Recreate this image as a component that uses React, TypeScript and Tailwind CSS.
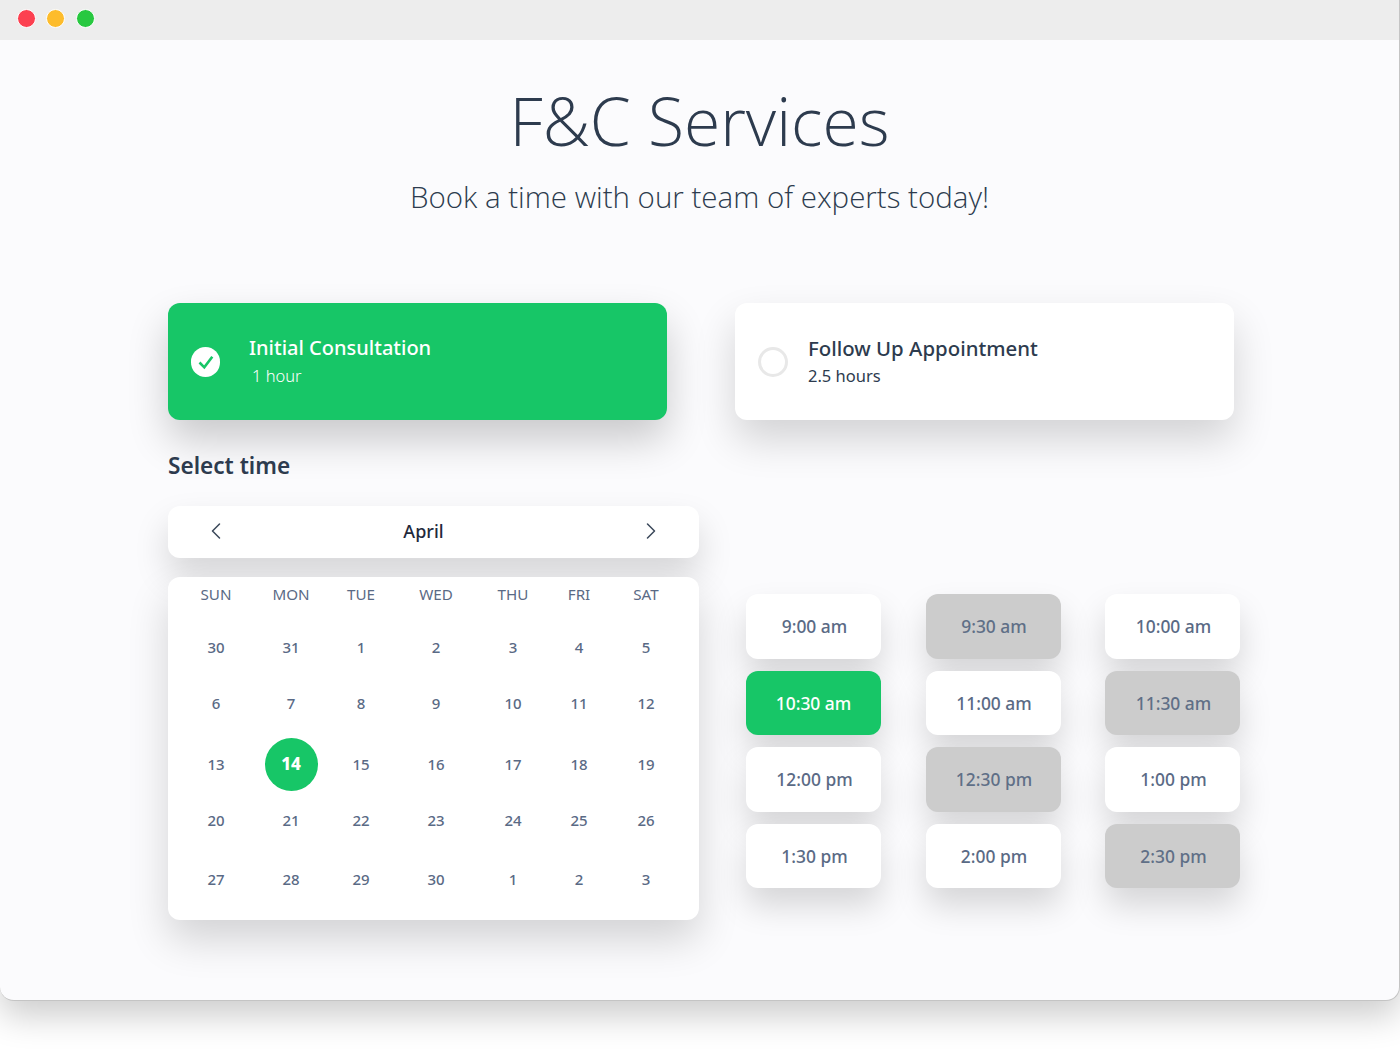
import React from 'react';
import { ChevronLeft, ChevronRight } from 'lucide-react';

const days = ['SUN', 'MON', 'TUE', 'WED', 'THU', 'FRI', 'SAT'];
const dates = [
  30, 31, 1, 2, 3, 4, 5,
  6, 7, 8, 9, 10, 11, 12,
  13, 14, 15, 16, 17, 18, 19,
  20, 21, 22, 23, 24, 25, 26,
  27, 28, 29, 30, 1, 2, 3,
];
const times = [
  { label: '9:00 am', state: 'open' },
  { label: '9:30 am', state: 'taken' },
  { label: '10:00 am', state: 'open' },
  { label: '10:30 am', state: 'selected' },
  { label: '11:00 am', state: 'open' },
  { label: '11:30 am', state: 'taken' },
  { label: '12:00 pm', state: 'open' },
  { label: '12:30 pm', state: 'taken' },
  { label: '1:00 pm', state: 'open' },
  { label: '1:30 pm', state: 'open' },
  { label: '2:00 pm', state: 'open' },
  { label: '2:30 pm', state: 'taken' },
];

const App: React.FC = () => {
  return (
    <div className="min-h-[1054px] bg-white pb-[53px] font-['Noto_Sans',sans-serif]">
      <div className="h-[1001px] rounded-b-[14px] border-r border-b border-[#c4c4c4] bg-[#fbfbfd] shadow-[0_15px_34px_rgba(0,0,0,0.2)]">
        <div className="flex h-10 items-center gap-[10.5px] bg-[#ededed] pb-[4px] pl-[16.5px]">
          <span className="h-[19px] w-[19px] rounded-full border border-white bg-[#fc4050]" />
          <span className="h-[19px] w-[19px] rounded-full border border-white bg-[#fdbc2c]" />
          <span className="h-[19px] w-[19px] rounded-full border border-white bg-[#28c840]" />
        </div>

        <h1 className="mt-[36px] text-center font-['Open_Sans',sans-serif] text-[66px] leading-[88px] font-light text-[#2d3b4e]">
          F&amp;C Services
        </h1>
        <p className="mt-[11px] text-center font-['Open_Sans',sans-serif] text-[29.5px] leading-[44px] font-light text-[#2d3b4e]">
          Book a time with our team of experts today!
        </p>

        <div className="mt-[84px] pl-[168px]">
          <div className="flex gap-[68px]">
            <div className="flex h-[117px] w-[499px] items-center rounded-xl bg-[#17c667] pl-[23px] text-white shadow-[0_20px_40px_rgba(0,0,0,0.2)]">
              <span className="flex h-[30px] w-[29px] items-center justify-center rounded-full bg-white">
                <svg width="22" height="22" viewBox="0 0 22 22" fill="none">
                  <path d="M4.5 11.5l4.8 4.8 8-10.6" stroke="#17c667" strokeWidth="2.6" />
                </svg>
              </span>
              <div className="ml-[29px]">
                <div className="text-[20px] leading-7 font-medium">Initial Consultation</div>
                <div className="ml-[3px] text-[16.5px] leading-7 font-light">1 hour</div>
              </div>
            </div>
            <div className="flex h-[117px] w-[499px] items-center rounded-xl bg-white pl-[23px] text-[#2d3b4e] shadow-[0_20px_40px_rgba(0,0,0,0.16)]">
              <span className="h-[30px] w-[30px] rounded-full border-[3px] border-[#e8e8e8]" />
              <div className="ml-[20px]">
                <div className="text-[20.4px] leading-7 font-medium">Follow Up Appointment</div>
                <div className="text-[16.5px] leading-7">2.5 hours</div>
              </div>
            </div>
          </div>

          <div className="flex items-start">
            <div className="w-[531px]">
              <h2 className="mt-[28px] text-[22.6px] leading-9 font-semibold text-[#2d3b4e]">Select time</h2>
              <div className="mt-[22px] flex h-[52px] items-center justify-between rounded-xl bg-white px-[34px] shadow-[0_18px_34px_rgba(0,0,0,0.15)]">
                <ChevronLeft size={28} strokeWidth={1.3} className="mb-[2px] text-[#3d4a5c]" />
                <span className="mb-[2px] pr-[20px] text-[18px] font-medium text-[#1f2a3c]">April</span>
                <ChevronRight size={28} strokeWidth={1.3} className="mb-[2px] text-[#3d4a5c]" />
              </div>
              <div className="mt-[19px] grid h-[343px] grid-cols-[75px_75px_65px_85px_69px_63px_71px] grid-rows-[42px_56px_56px_66px_46px_73px] rounded-xl bg-white px-[10.5px] text-[#5a6a85] shadow-[0_20px_40px_rgba(0,0,0,0.16)]">
                {days.map((day) => (
                  <div key={day} className="pt-[7px] text-center text-[15.2px] leading-5">
                    {day}
                  </div>
                ))}
                {dates.map((date, i) => (
                  <div key={i} className="flex items-center justify-center text-[15px] font-medium">
                    {i === 15 ? (
                      <span className="flex h-[53px] w-[53px] items-center justify-center rounded-full bg-[#17c667] text-[17px] font-extrabold text-white">
                        {date}
                      </span>
                    ) : (
                      date
                    )}
                  </div>
                ))}
              </div>
            </div>

            <div className="mt-[174px] ml-[47px] grid grid-cols-[135px_135px_135px] gap-x-[44.5px] gap-y-[12px]">
              {times.map((t) => (
                <div
                  key={t.label}
                  className={
                    t.state === 'selected'
                      ? 'flex h-[64.5px] items-center justify-center rounded-xl bg-[#17c667] text-[17.4px] font-medium text-white shadow-[0_18px_32px_rgba(0,0,0,0.15)]'
                      : t.state === 'taken'
                        ? 'flex h-[64.5px] items-center justify-center rounded-xl bg-[#cccccc] pl-[2px] text-[17.4px] font-medium text-[#5f6f87] shadow-[0_18px_32px_rgba(0,0,0,0.15)]'
                        : 'flex h-[64.5px] items-center justify-center rounded-xl bg-white pl-[2px] text-[17.4px] font-medium text-[#5a6a85] shadow-[0_18px_32px_rgba(0,0,0,0.15)]'
                  }
                >
                  {t.label}
                </div>
              ))}
            </div>
          </div>
        </div>
      </div>
    </div>
  );
};

export default App;
